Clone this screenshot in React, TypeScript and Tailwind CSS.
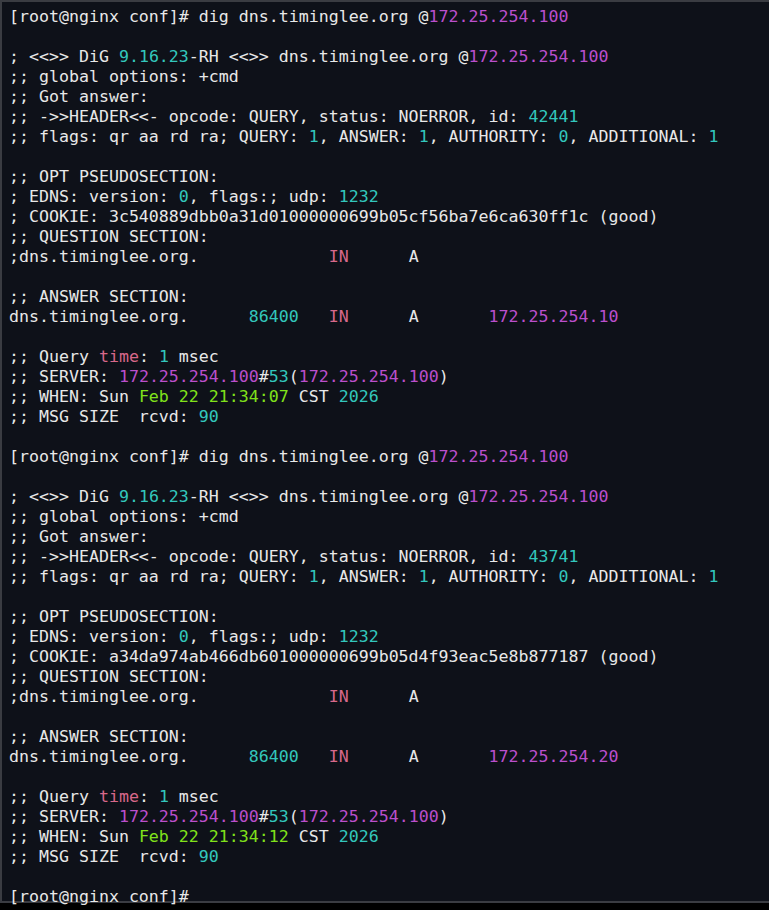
type Seg = [string, string?];

const C = "text-[#33c7bd]";
const M = "text-[#bb4fcc]";
const P = "text-[#d7688a]";
const G = "text-[#80e21b]";

function block(id: string, cookie: string, ip: string, when: string): Seg[][] {
  return [
    [["[root@nginx conf]# dig dns.timinglee.org @"], ["172.25.254.100", M]],
    [],
    [["; <<>> DiG "], ["9.16.23", C], ["-RH <<>> dns.timinglee.org @"], ["172.25.254.100", M]],
    [[";; global options: +cmd"]],
    [[";; Got answer:"]],
    [[";; ->>HEADER<<- opcode: QUERY, status: NOERROR, id: "], [id, C]],
    [
      [";; flags: qr aa rd ra; QUERY: "],
      ["1", C],
      [", ANSWER: "],
      ["1", C],
      [", AUTHORITY: "],
      ["0", C],
      [", ADDITIONAL: "],
      ["1", C],
    ],
    [],
    [[";; OPT PSEUDOSECTION:"]],
    [["; EDNS: version: "], ["0", C], [", flags:; udp: "], ["1232", C]],
    [["; COOKIE: " + cookie + " (good)"]],
    [[";; QUESTION SECTION:"]],
    [[";dns.timinglee.org.             "], ["IN", P], ["      A"]],
    [],
    [[";; ANSWER SECTION:"]],
    [
      ["dns.timinglee.org.      "],
      ["86400", C],
      ["   "],
      ["IN", P],
      ["      A       "],
      [ip, M],
    ],
    [],
    [[";; Query "], ["time", P], [": "], ["1", C], [" msec"]],
    [[";; SERVER: "], ["172.25.254.100", M], ["#"], ["53", C], ["("], ["172.25.254.100", M], [")"]],
    [[";; WHEN: Sun "], ["Feb 22 " + when, G], [" CST "], ["2026", C]],
    [[";; MSG SIZE  rcvd: "], ["90", C]],
    [],
  ];
}

const lines: Seg[][] = [
  ...block("42441", "3c540889dbb0a31d01000000699b05cf56ba7e6ca630ff1c", "172.25.254.10", "21:34:07"),
  ...block("43741", "a34da974ab466db601000000699b05d4f93eac5e8b877187", "172.25.254.20", "21:34:12"),
  [["[root@nginx conf]#"]],
];

export default function App() {
  return (
    <div className="w-[769px] h-[910px] bg-black overflow-hidden">
      <div
        className="h-[903px] bg-[#0e1119] border-t-2 border-l-2 border-b-2 border-[#3a3c42] pl-[7px] pt-[5px] text-[#e8e8e8] text-[16.6px] leading-[20px] tracking-[0px]"
        style={{ fontFamily: '"DejaVu Sans Mono", "Liberation Mono", monospace' }}
      >
        {lines.map((line, i) => (
          <div key={i} className="h-[20px] whitespace-pre">
            {line.map(([t, c], j) => (
              <span key={j} className={c}>
                {t}
              </span>
            ))}
          </div>
        ))}
      </div>
    </div>
  );
}
